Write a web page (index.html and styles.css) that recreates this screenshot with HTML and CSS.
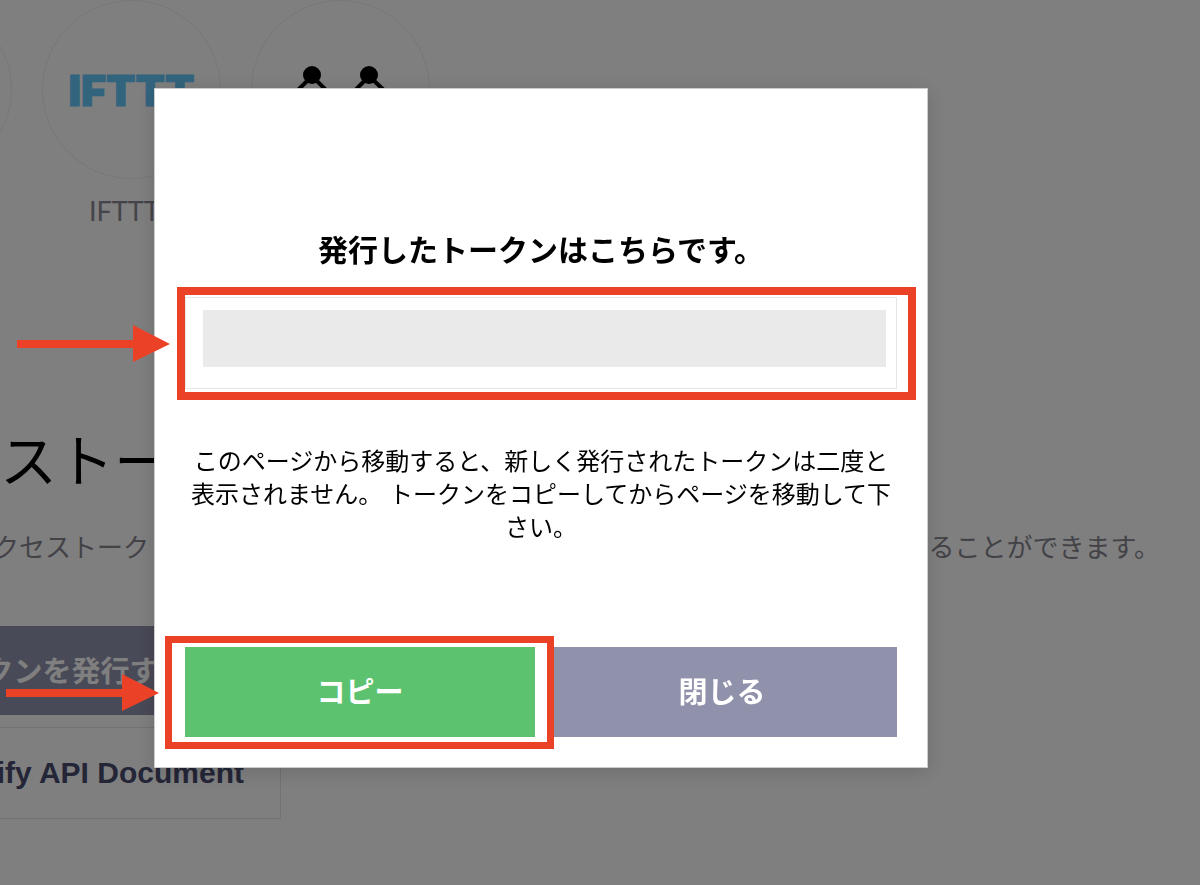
FILE: index.html
```html
<!DOCTYPE html>
<html lang="ja">
<head>
<meta charset="utf-8">
<meta name="viewport" content="width=device-width, initial-scale=1">
<title>アクセストークンの発行</title>
<link rel="stylesheet" href="styles.css">
</head>
<body>
<main class="page">
  <ul class="services">
    <li class="service"><span class="service-icon"></span></li>
    <li class="service">
      <span class="service-icon ifttt-logo">IFTTT</span>
      <span class="service-name">IFTTT</span>
    </li>
    <li class="service">
      <span class="service-icon">
        <svg class="node-logo" viewBox="0 0 120 60" aria-hidden="true">
          <path d="M13 34 31 16 60 45 88 16 107 34" fill="none" stroke="#000" stroke-width="4"/>
          <circle cx="31" cy="15" r="9"/>
          <circle cx="88" cy="15" r="9"/>
        </svg>
      </span>
    </li>
  </ul>
  <h1 class="heading">ストー</h1>
  <p class="description"><span>クセストーク</span><span>ることができます。</span></p>
  <div class="page-actions">
    <button class="issue" type="button">トークンを発行する</button>
    <a class="document" href="#api">LINE Notify API Document</a>
  </div>
</main>

<div class="overlay">
  <section class="modal" role="dialog" aria-modal="true" aria-labelledby="token-title">
    <h2 class="modal-title" id="token-title">発行したトークンはこちらです。</h2>
    <div class="token-field">
      <input class="token" type="text" readonly aria-labelledby="token-title">
      <span class="frame frame-token"></span>
      <svg class="arrow arrow-token" viewBox="0 0 153 38" aria-hidden="true"><path d="M0 15H116V0L153 19 116 37V23H0Z"/></svg>
    </div>
    <p class="notice">このページから移動すると、新しく発行されたトークンは二度と表示されません。 トークンをコピーしてからページを移動して下さい。</p>
    <div class="modal-actions">
      <div class="copy-field">
        <button class="action copy" type="button">コピー</button>
        <span class="frame frame-copy"></span>
        <svg class="arrow arrow-copy" viewBox="0 0 153 38" aria-hidden="true"><path d="M0 15H116V0L153 19 116 37V23H0Z"/></svg>
      </div>
      <button class="action close" type="button">閉じる</button>
    </div>
  </section>
</div>
</body>
</html>
```

FILE: styles.css
```css
* {
  box-sizing: border-box;
}

body {
  margin: 0;
  overflow: hidden;
  background: #fff;
  color: #000;
  font-family: "Liberation Sans", "Noto Sans CJK JP", sans-serif;
}

button,
input {
  font-family: inherit;
}

.page {
  white-space: nowrap;
}

.services {
  display: flex;
  gap: 30px;
  margin: 0 0 0 -167px;
  padding: 0;
  list-style: none;
}

.service {
  display: flex;
  flex-direction: column;
  gap: 16px;
}

.service-icon {
  display: flex;
  align-items: center;
  justify-content: center;
  width: 179px;
  height: 179px;
  border: 1px solid #eee;
  border-radius: 50%;
}

.ifttt-logo {
  color: #66c9fc;
  font-family: Inter, sans-serif;
  font-size: 43px;
  font-weight: 900;
  -webkit-text-stroke: 1px #66c9fc;
}

.node-logo {
  width: 120px;
  height: 60px;
}

.service-name {
  padding-left: 47px;
  color: #888896;
  font-family: Lato, sans-serif;
  font-size: 27px;
  line-height: 32px;
}

.heading {
  margin: 195px 0 26px;
  font-size: 57px;
  font-weight: 400;
  line-height: 80px;
}

.description {
  display: flex;
  justify-content: space-between;
  margin: 0 0 58px -7px;
  padding-right: 40px;
  color: #85858f;
  font-size: 26px;
  line-height: 40px;
}

.page-actions {
  display: flex;
  flex-direction: column;
  gap: 12px;
  width: 448px;
  margin-left: -167px;
}

.issue {
  height: 89px;
  padding: 0 0 4px;
  border: 0;
  background: #9294ae;
  color: #fff;
  font-size: 29px;
  font-weight: 700;
}

.document {
  border: 1px solid #e4e4e8;
  color: #484c70;
  font-size: 30px;
  font-weight: 700;
  line-height: 90px;
  text-align: center;
  text-decoration: none;
}

.overlay {
  position: fixed;
  inset: 0;
  padding: 88px 272px 0 154px;
  background: rgba(0, 0, 0, 0.5);
}

.modal {
  padding: 142px 30px 30px;
  border: 1px solid #ccc;
  background: #fff;
  box-shadow: 0 4px 20px rgba(0, 0, 0, 0.15);
}

.modal-title {
  margin: 0 0 26px;
  font-size: 30px;
  font-weight: 700;
  line-height: 40px;
  text-align: center;
}

.token-field,
.copy-field {
  position: relative;
  display: flex;
}

.token {
  width: 100%;
  height: 92px;
  padding: 12px 10px 21px 17px;
  border: 1px solid #e5e6e8;
  background: #eaeaea content-box;
  font-size: 24px;
}

.notice {
  margin: 56px 0 103px;
  font-size: 24px;
  line-height: 33px;
  text-align: center;
}

.modal-actions {
  display: grid;
  grid-template-columns: 1fr 1fr;
  gap: 12px;
}

.action {
  width: 100%;
  height: 90px;
  padding: 0 0 4px;
  border: 0;
  color: #fff;
  font-size: 29px;
  font-weight: 700;
}

.copy {
  background: #5dc270;
}

.close {
  background: #9091ab;
}

.frame {
  position: absolute;
  border: 7px solid #eb4227;
  pointer-events: none;
}

.frame-token {
  inset: -10px -19px -11px -8px;
  border-width: 8px;
}

.frame-copy {
  inset: -11px -19px -12px -20px;
}

.arrow {
  position: absolute;
  width: 153px;
  height: 38px;
  fill: #eb4227;
}

.arrow-token {
  top: 28px;
  left: -168px;
}

.arrow-copy {
  top: 27px;
  left: -179px;
}
```
